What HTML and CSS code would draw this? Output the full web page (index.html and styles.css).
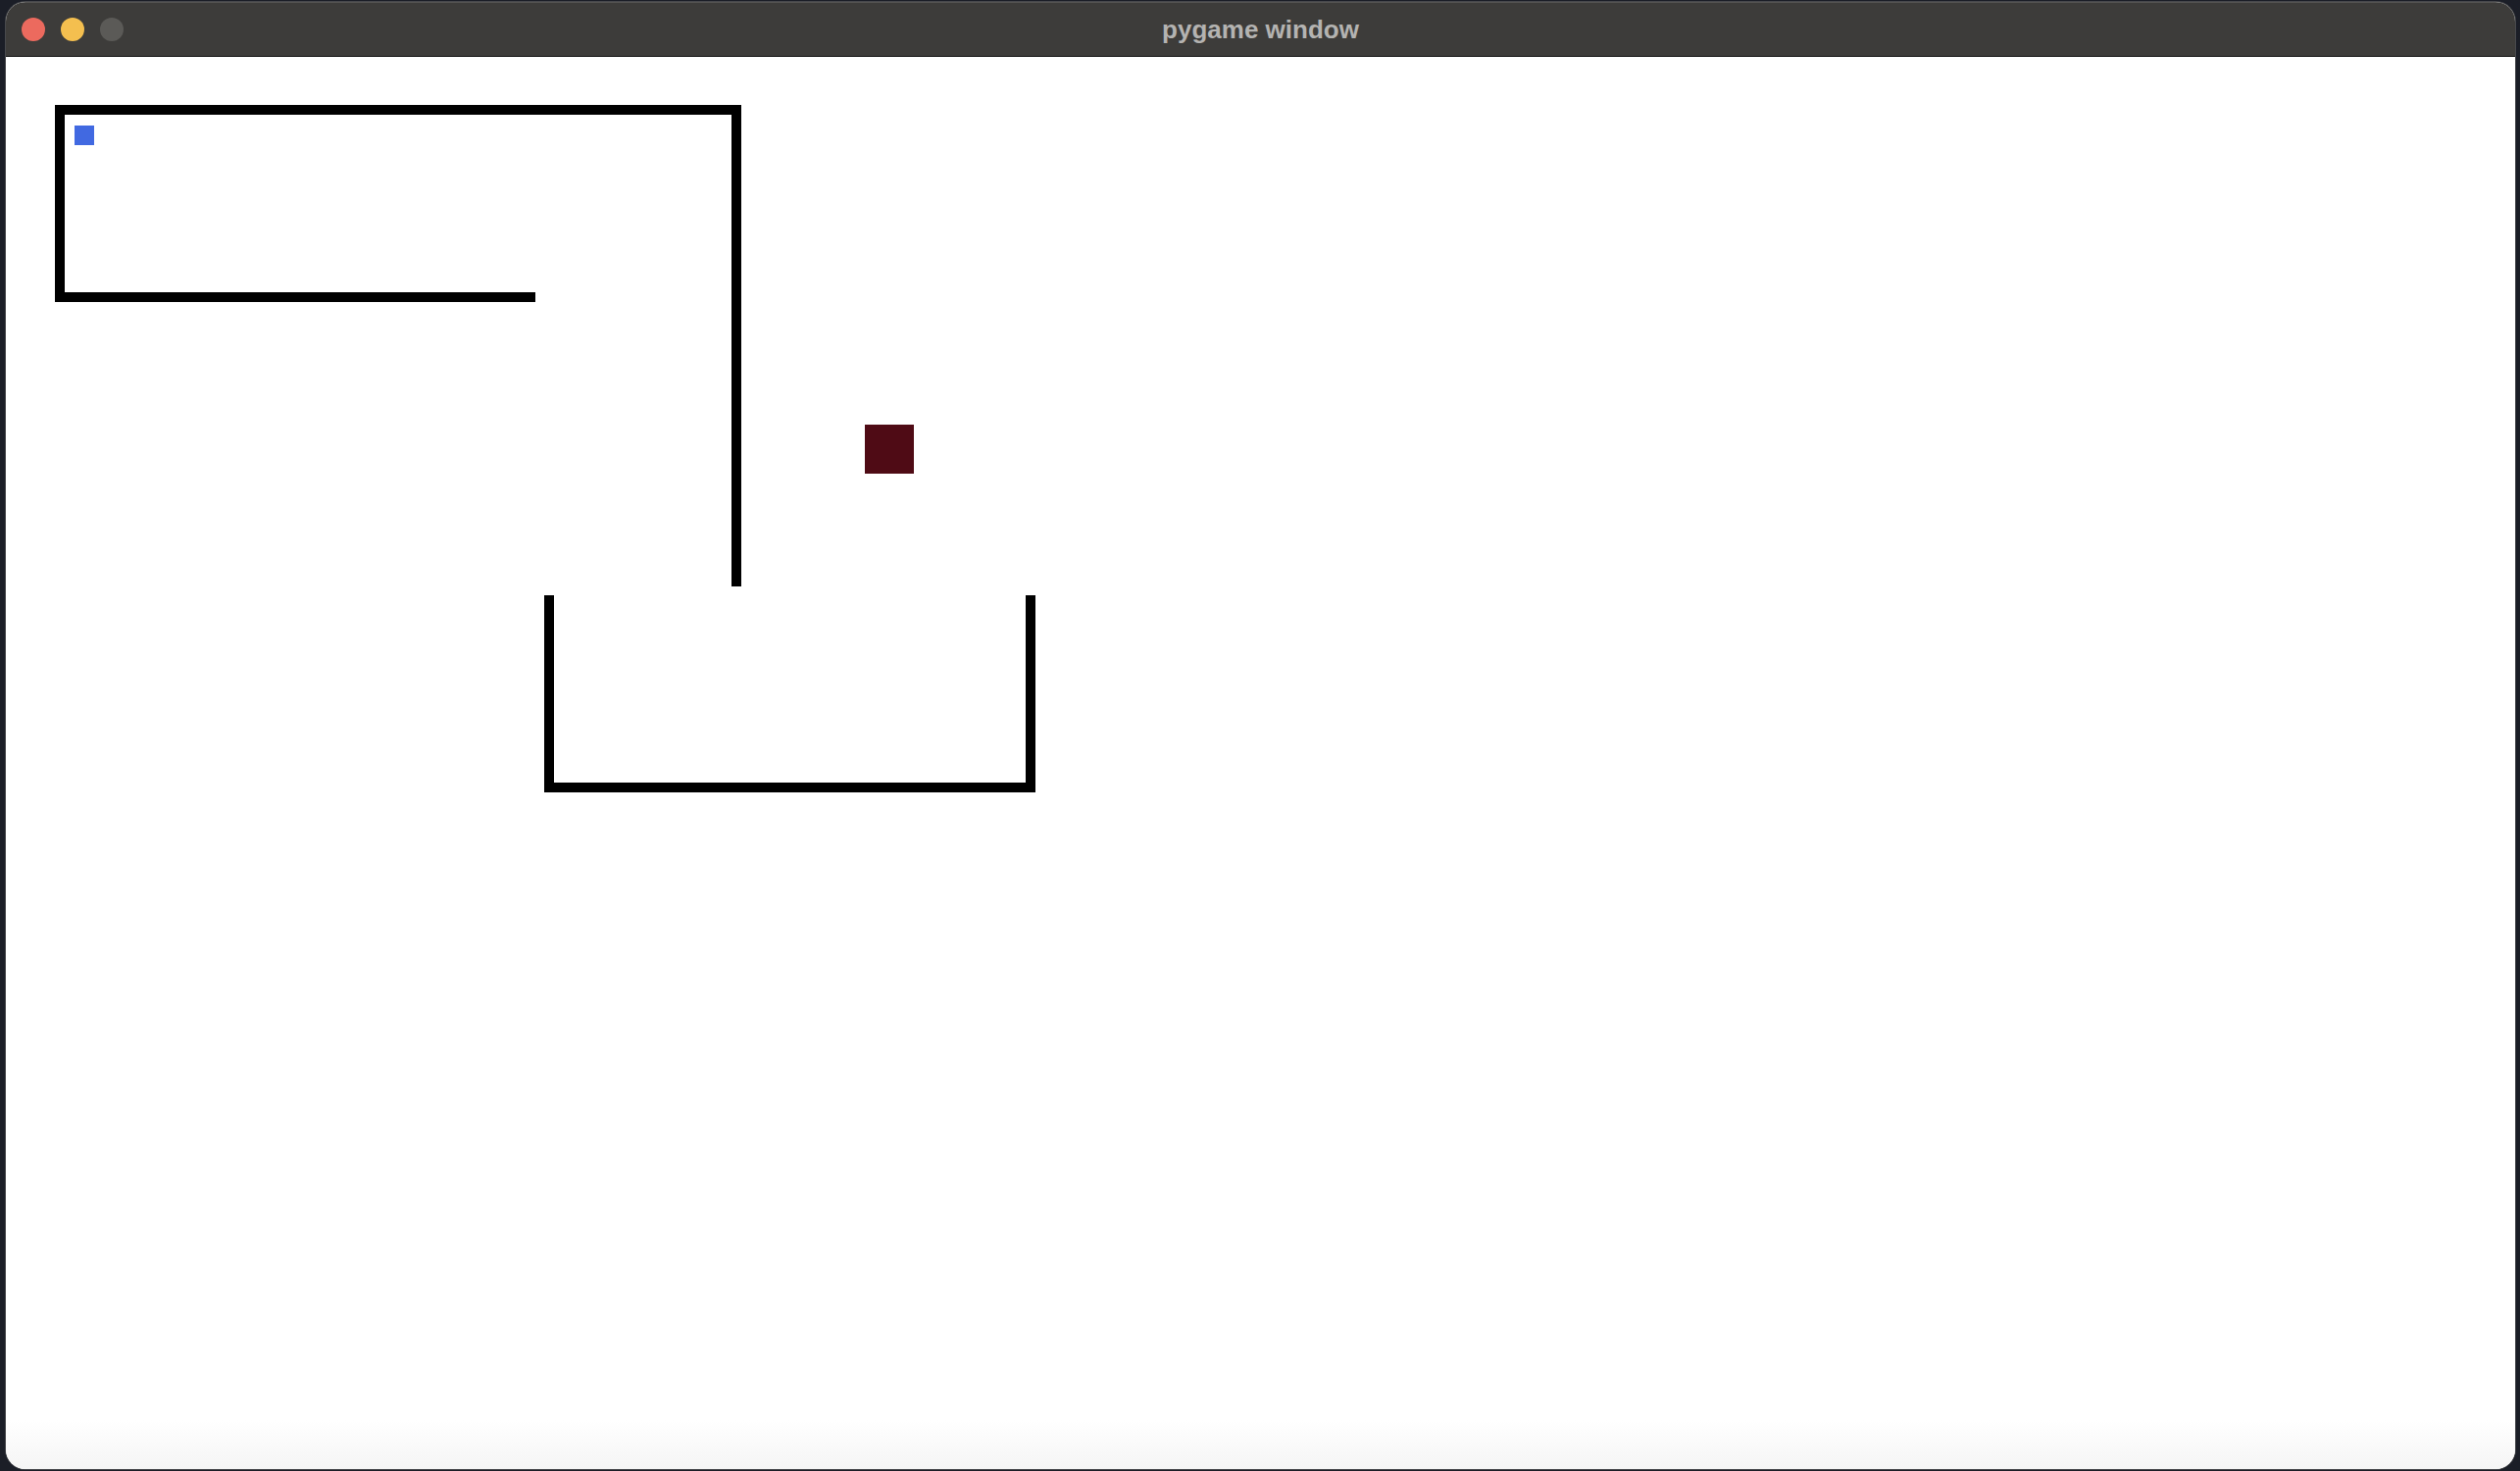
FILE: index.html
```html
<!DOCTYPE html>
<html>
<head>
<meta charset="utf-8">
<title>pygame window</title>
<link rel="stylesheet" href="styles.css">
</head>
<body>
<div class="window">
  <div class="titlebar">
    <div class="lights">
      <span class="light red"></span>
      <span class="light yellow"></span>
      <span class="light grey"></span>
    </div>
    <div class="title">pygame window</div>
  </div>
  <div class="canvas">
    <div class="wall w-top"></div>
    <div class="wall w-left"></div>
    <div class="wall w-bottom"></div>
    <div class="wall w-right"></div>
    <div class="wall u-left"></div>
    <div class="wall u-bottom"></div>
    <div class="wall u-right"></div>
    <div class="player"></div>
    <div class="goal"></div>
  </div>
</div>
</body>
</html>
```
FILE: styles.css
```css
html, body {
  margin: 0;
  padding: 0;
  background: #1b1e27;
  width: 2570px;
  height: 1500px;
  overflow: hidden;
}
.window {
  margin-left: 6px;
  margin-top: 2px;
  width: 2559px;
  height: 1496px;
  border-radius: 20px;
  overflow: hidden;
  display: flex;
  flex-direction: column;
  box-shadow: 0 0 0 1px rgba(110, 110, 110, 0.55);
  background: #fff;
}
.titlebar {
  height: 55px;
  flex: 0 0 55px;
  background: #3d3c3a;
  border-bottom: 1px solid #141414;
  position: relative;
  display: flex;
  align-items: center;
  justify-content: center;
  box-shadow: inset 0 1px 0 rgba(255,255,255,0.12);
}
.lights {
  position: absolute;
  left: 16px;
  top: 16px;
  display: flex;
  gap: 16px;
}
.light {
  width: 24px;
  height: 24px;
  border-radius: 50%;
  display: block;
}
.red { background: #ec6a5e; }
.yellow { background: #f4bf4f; }
.grey { background: #5b5a57; }
.title {
  font-family: "Liberation Sans", Arial, sans-serif;
  font-weight: bold;
  font-size: 26px;
  color: #b4b3b1;
  margin-top: 2px;
}
.canvas {
  flex: 1;
  position: relative;
  background: linear-gradient(to bottom, #ffffff 0, #ffffff calc(100% - 50px), #f5f5f5 100%);
}
.wall {
  position: absolute;
  background: #000;
}
.w-top { left: 50px; top: 49px; width: 700px; height: 10px; }
.w-left { left: 50px; top: 49px; width: 10px; height: 201px; }
.w-bottom { left: 50px; top: 240px; width: 490px; height: 10px; }
.w-right { left: 740px; top: 49px; width: 10px; height: 491px; }
.u-left { left: 549px; top: 549px; width: 10px; height: 201px; }
.u-bottom { left: 549px; top: 740px; width: 501px; height: 10px; }
.u-right { left: 1040px; top: 549px; width: 10px; height: 201px; }
.player {
  position: absolute;
  left: 70px;
  top: 70px;
  width: 20px;
  height: 20px;
  background: #4169e1;
}
.goal {
  position: absolute;
  left: 876px;
  top: 375px;
  width: 50px;
  height: 50px;
  background: #4f0b15;
}
```
